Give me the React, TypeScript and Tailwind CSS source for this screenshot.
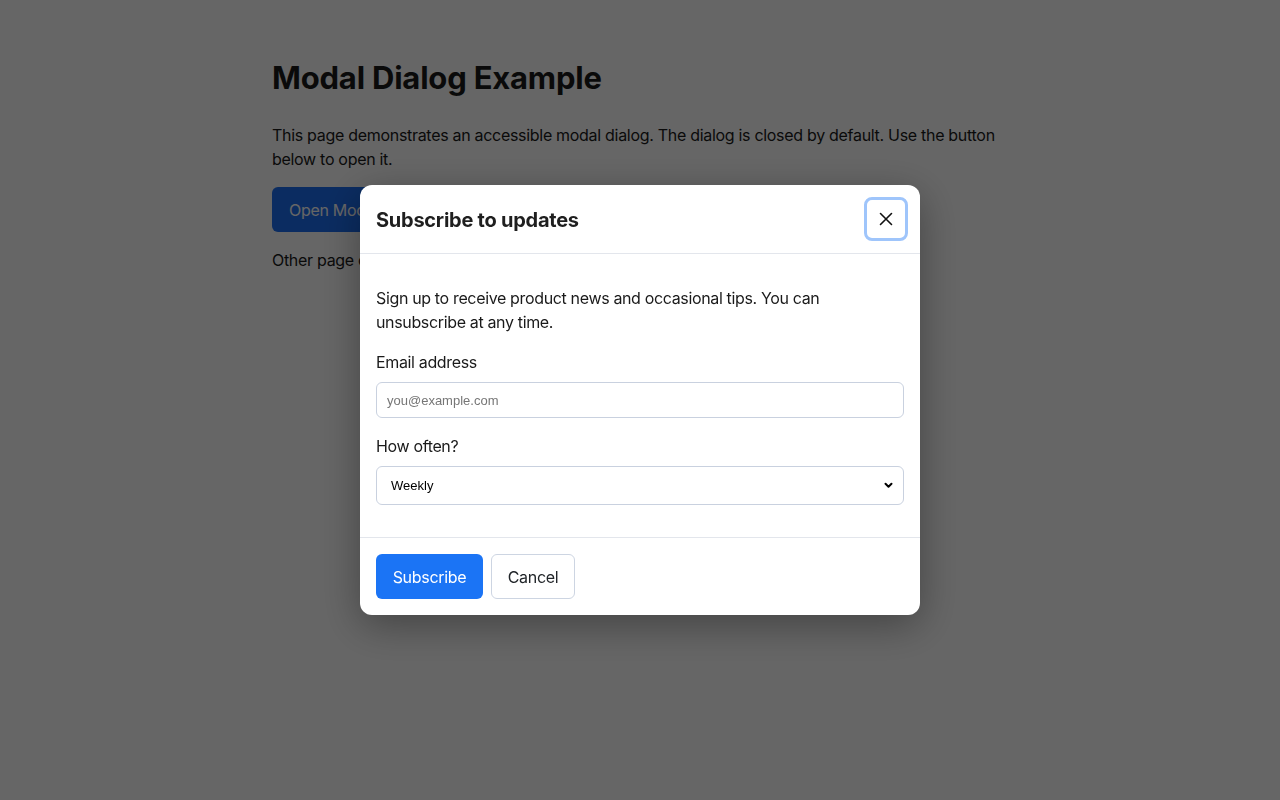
import React from "react";

export default function App() {
  return (
    <div
      className="relative min-h-[800px] w-full bg-white text-[#1a1a1a]"
      style={{ fontFamily: "Inter, 'Noto Sans', 'Liberation Sans', sans-serif" }}
    >
      <main className="mx-auto w-[736px] pt-[58px]">
        <h1 className="text-[31px] font-bold leading-[40px] tracking-[-0.2px]">Modal Dialog Example</h1>
        <p className="mt-[25px] text-[16px] leading-[24px] tracking-[-0.3px]">
          This page demonstrates an accessible modal dialog. The dialog is closed by default. Use the button below to open it.
        </p>
        <button className="mt-[16px] h-[45px] rounded-[6px] bg-[#1d6ff2] px-[17px] text-[16px] tracking-[-0.3px] text-white">
          Open Modal
        </button>
        <p className="mt-[16px] text-[16px] leading-[24px] tracking-[-0.3px]">Other page content goes here.</p>
      </main>

      <div className="fixed inset-0 flex items-start justify-center bg-black/60 pt-[185px]">
        <div className="w-[560px] overflow-hidden rounded-[12px] bg-white shadow-[0_10px_40px_rgba(0,0,0,0.35)]">
          <div className="flex h-[69px] items-center justify-between border-b border-[#e3e6ec] pl-[16px] pr-[12px]">
            <h2 className="pt-[1px] text-[20px] font-bold leading-[28px] tracking-[-0.25px] text-[#1f1f1f]">Subscribe to updates</h2>
            <button
              aria-label="Close"
              className="flex h-[44px] w-[44px] items-center justify-center rounded-[8px] border-[3px] border-[#9fc5fb] bg-white"
            >
              <svg width="14" height="14" viewBox="0 0 14 14" fill="none" stroke="#111" strokeWidth="1.6" strokeLinecap="round">
                <path d="M1.5 1.5 L12.5 12.5 M12.5 1.5 L1.5 12.5" />
              </svg>
            </button>
          </div>

          <div className="px-[16px] pb-[32px] pt-[32px] text-[16px] leading-[24px] tracking-[-0.35px]">
            <p>Sign up to receive product news and occasional tips. You can unsubscribe at any time.</p>
            <label className="mt-[16px] block">Email address</label>
            <input
              type="email"
              placeholder="you@example.com"
              className="mt-[8px] block h-[36px] w-full rounded-[6px] border border-[#c9d1df] px-[10px] text-[13px] tracking-normal placeholder:text-[#767676] outline-none"
              style={{ fontFamily: "'Liberation Sans', Arial, sans-serif" }}
            />
            <label className="mt-[16px] block">How often?</label>
            <div className="relative mt-[8px]">
              <select
                className="block h-[39px] w-full appearance-none rounded-[6px] border border-[#c9d1df] bg-white pl-[14px] text-[13px] tracking-normal text-black outline-none"
                style={{ fontFamily: "'Liberation Sans', Arial, sans-serif" }}
                defaultValue="weekly"
              >
                <option value="daily">Daily</option>
                <option value="weekly">Weekly</option>
                <option value="monthly">Monthly</option>
              </select>
              <svg
                className="pointer-events-none absolute right-[11px] top-[16px]"
                width="9"
                height="7"
                viewBox="0 0 9 7"
                fill="none"
                stroke="#000"
                strokeWidth="2"
                strokeLinecap="round"
                strokeLinejoin="round"
              >
                <path d="M1.5 1.8 L4.5 4.8 L7.5 1.8" />
              </svg>
            </div>
          </div>

          <div className="flex gap-[8px] border-t border-[#e3e6ec] p-[16px]">
            <button className="h-[45px] w-[107px] rounded-[6px] bg-[#1b74f5] text-[16px] tracking-[-0.3px] text-white">Subscribe</button>
            <button className="h-[45px] w-[84px] rounded-[6px] border border-[#cdd5e2] bg-white text-[16px] tracking-[-0.3px] text-[#212529]">
              Cancel
            </button>
          </div>
        </div>
      </div>
    </div>
  );
}
